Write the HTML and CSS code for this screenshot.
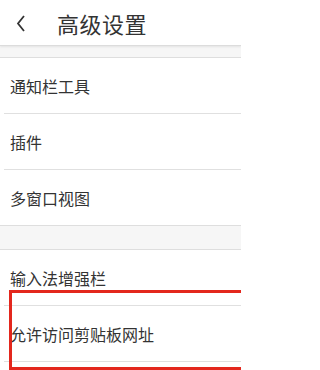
FILE: index.html
```html
<!DOCTYPE html>
<html lang="zh-CN">
<head>
<meta charset="utf-8">
<title>高级设置</title>
<link rel="stylesheet" href="styles.css">
</head>
<body>
<div class="page">
  <header class="topbar">
    <span class="back">
      <svg width="12" height="18" viewBox="0 0 12 18"><polyline points="9,2 3,9.5 9,17" fill="none" stroke="#333" stroke-width="1.8"/></svg>
    </span>
    <h1 class="title">高级设置</h1>
  </header>
  <div class="band band-small"></div>
  <ul class="list">
    <li class="item">通知栏工具</li>
    <li class="item">插件</li>
    <li class="item last">多窗口视图</li>
  </ul>
  <div class="band band-large"></div>
  <ul class="list">
    <li class="item">输入法增强栏</li>
    <li class="item">允许访问剪贴板网址</li>
    <li class="item"></li>
  </ul>
  <div class="highlight"></div>
</div>
</body>
</html>
```

FILE: styles.css
```css
html, body {
  margin: 0;
  padding: 0;
  background: #ffffff;
}
body {
  font-family: "Noto Sans CJK SC", "Noto Sans", sans-serif;
  color: #333333;
  overflow: hidden;
}
.page {
  position: relative;
  width: 241px;
  height: 370px;
  overflow: hidden;
}
.topbar {
  height: 45px;
  display: flex;
  align-items: center;
  border-bottom: 1px solid #dcdcdc;
  box-shadow: 0 1px 2px rgba(0,0,0,0.08);
  position: relative;
  z-index: 1;
  background: #fff;
}
.back {
  display: flex;
  width: 12px;
  height: 18px;
  margin-left: 15px;
  margin-top: 1px;
}
.title {
  margin: 0 0 0 30px;
  font-size: 22px;
  font-weight: 400;
  line-height: 1;
  color: #333;
  letter-spacing: 0.5px;
}
.band {
  background: #f6f6f6;
  border-bottom: 1px solid #dedede;
}
.band-small {
  height: 11px;
}
.band-large {
  height: 23px;
  border-top: 1px solid #dedede;
}
.list {
  list-style: none;
  margin: 0;
  padding: 0;
}
.item {
  height: 55px;
  display: flex;
  align-items: center;
  padding-left: 10px;
  font-size: 16px;
  line-height: 1;
  position: relative;
}
.item::after {
  content: "";
  position: absolute;
  left: 4px;
  right: 0;
  bottom: -1px;
  height: 1px;
  background: #e0e0e0;
}
.item {
  margin-bottom: 1px;
}
.item.last {
  margin-bottom: 0;
}
.item.last::after {
  display: none;
}
.highlight {
  position: absolute;
  left: 9px;
  top: 290px;
  width: 250px;
  height: 74px;
  border: 3px solid #e3271d;
}
```
